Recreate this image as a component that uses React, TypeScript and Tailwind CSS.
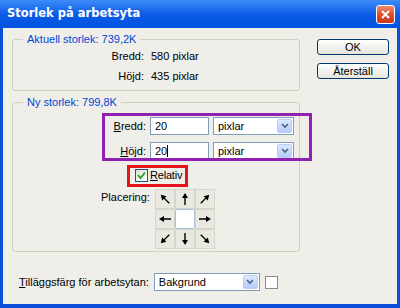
import type { ReactNode } from 'react';

const font = { fontFamily: '"Liberation Sans", Arial, sans-serif' };

function Arrow({ deg }: { deg: number }) {
    return (
        <svg width="14" height="14" viewBox="0 0 14 14" style={{ transform: `rotate(${deg}deg)` }}>
            <line x1="7" y1="13" x2="7" y2="4" stroke="#000" strokeWidth="1.4" />
            <polygon points="7,1 4,6 10,6" fill="#000" />
        </svg>
    );
}

function Cell({ children, center }: { children?: ReactNode; center?: boolean }) {
    return (
        <div
            className={
                center
                    ? 'w-[20px] h-[20px] bg-white border border-[#a9c0dc] rounded-[2px]'
                    : 'w-[20px] h-[20px] flex items-center justify-center bg-[#e9e8e1] border border-[#d6d5cc]'
            }
        >
            {children}
        </div>
    );
}

function Select({ value, w }: { value: string; w: string }) {
    return (
        <div className={`${w} h-[18px] flex items-center justify-between bg-white border border-[#7f9db9] pl-[4px] pr-[1px]`}>
            <span className="text-[11px] leading-none">{value}</span>
            <div className="w-[15px] h-[14px] flex items-center justify-center rounded-[2px] bg-linear-to-b from-[#dfe9fd] to-[#b5cbf8] border border-[#b9cdf5]">
                <svg width="8" height="6" viewBox="0 0 8 6">
                    <polyline points="1,1 4,4 7,1" fill="none" stroke="#4d6185" strokeWidth="1.6" />
                </svg>
            </div>
        </div>
    );
}

function XpButton({ children }: { children: ReactNode }) {
    return (
        <button className="w-[72px] h-[16px] rounded-[3px] border border-[#003c74] bg-linear-to-b from-white to-[#e6e5dc] text-[11px] leading-none text-black">
            {children}
        </button>
    );
}

export default function App() {
    return (
        <div className="relative w-[400px] h-[308px] bg-[#0a4fd8] flex flex-col" style={font}>
            {/* title bar */}
            <div className="h-[28px] flex items-center justify-between pl-[7px] pr-[5px] bg-linear-to-b from-[#3c8cf8] via-[#0d5ce8] to-[#0052de]">
                <span className="text-white font-bold" style={{ fontFamily: '"DejaVu Sans", sans-serif', fontSize: 11.5 }}>
                    Storlek på arbetsyta
                </span>
                <div className="w-[19px] h-[19px] rounded-[3px] border border-white bg-linear-to-b from-[#ec8a6c] via-[#e0502b] to-[#c9391a] flex items-center justify-center">
                    <svg width="11" height="11" viewBox="0 0 11 11">
                        <line x1="2" y1="2" x2="9" y2="9" stroke="#fff" strokeWidth="2" />
                        <line x1="9" y1="2" x2="2" y2="9" stroke="#fff" strokeWidth="2" />
                    </svg>
                </div>
            </div>

            {/* body */}
            <div className="flex-1 mx-[3px] mb-[4px] bg-[#efeee8] flex flex-col">
                <div className="flex">
                    <div className="ml-[9px] w-[288px]">
                        <fieldset className="mt-[5px] pb-[4px] border border-[#d0d0bf] rounded-[3px]">
                            <legend className="ml-[10px] px-[4px] text-[11px] leading-[13px] text-[#0046d5]">Aktuell storlek: 739,2K</legend>
                            <div className="flex flex-col text-[11px]">
                                <div className="h-[20px] flex items-center">
                                    <span className="w-[131px] text-right">Bredd:</span>
                                    <span className="ml-[7px]">580 pixlar</span>
                                </div>
                                <div className="h-[20px] flex items-center">
                                    <span className="w-[131px] text-right">Höjd:</span>
                                    <span className="ml-[7px]">435 pixlar</span>
                                </div>
                            </div>
                        </fieldset>

                        <fieldset className="mt-[5px] pb-[2px] border border-[#d0d0bf] rounded-[3px]">
                            <legend className="ml-[10px] px-[4px] text-[11px] leading-[13px] text-[#0046d5]">Ny storlek: 799,8K</legend>
                            <div className="flex flex-col text-[11px] pt-[8px]">
                                <div className="h-[18px] flex items-center">
                                    <span className="w-[133px] text-right"><u>B</u>redd:</span>
                                    <div className="ml-[4px] w-[59px] h-[18px] bg-white border border-[#7f9db9] flex items-center pl-[4px]">20</div>
                                    <div className="ml-[4px]"><Select value="pixlar" w="w-[81px]" /></div>
                                </div>
                                <div className="h-[18px] mt-[7px] flex items-center">
                                    <span className="w-[133px] text-right"><u>H</u>öjd:</span>
                                    <div className="ml-[4px] w-[59px] h-[18px] bg-white border border-[#7f9db9] flex items-center pl-[4px]">
                                        20<span className="w-px h-[12px] bg-black" />
                                    </div>
                                    <div className="ml-[4px]"><Select value="pixlar" w="w-[81px]" /></div>
                                </div>
                                <div className="h-[14px] mt-[8px] flex items-center pl-[122px]">
                                    <div className="w-[13px] h-[13px] border border-[#1c5180] bg-linear-to-br from-[#dcdcd5] to-white flex items-center justify-center">
                                        <svg width="9" height="9" viewBox="0 0 9 9">
                                            <polyline points="1,4 3.5,7 8,1.5" fill="none" stroke="#21a121" strokeWidth="1.8" />
                                        </svg>
                                    </div>
                                    <span className="ml-[2px] tracking-[-0.2px]"><u>R</u>elativ</span>
                                </div>
                                <div className="flex mt-[7px] pl-[88px]">
                                    <span>Placering:</span>
                                    <div className="ml-[5px] grid grid-cols-3">
                                        <Cell><Arrow deg={-45} /></Cell>
                                        <Cell><Arrow deg={0} /></Cell>
                                        <Cell><Arrow deg={45} /></Cell>
                                        <Cell><Arrow deg={-90} /></Cell>
                                        <Cell center />
                                        <Cell><Arrow deg={90} /></Cell>
                                        <Cell><Arrow deg={-135} /></Cell>
                                        <Cell><Arrow deg={180} /></Cell>
                                        <Cell><Arrow deg={135} /></Cell>
                                    </div>
                                </div>
                            </div>
                        </fieldset>
                    </div>

                    <div className="ml-[17px] mt-[11px] flex flex-col gap-[8px]">
                        <XpButton>OK</XpButton>
                        <XpButton>Återställ</XpButton>
                    </div>
                </div>

                <div className="mt-[21px] ml-[16px] flex items-center text-[11px]">
                    <span><u>T</u>illäggsfärg för arbetsytan:</span>
                    <div className="ml-[5px]"><Select value="Bakgrund" w="w-[106px]" /></div>
                    <div className="ml-[5px] w-[13px] h-[13px] bg-white border border-[#8a8a8a]" />
                </div>
            </div>

            {/* annotations drawn on top of the dialog */}
            <div className="absolute left-[102px] top-[113px] w-[210px] h-[48px] border-[3px] border-[#8f22b0]" />
            <div className="absolute left-[127px] top-[165px] w-[61px] h-[22px] border-[3px] border-[#e3141c]" />
        </div>
    );
}
